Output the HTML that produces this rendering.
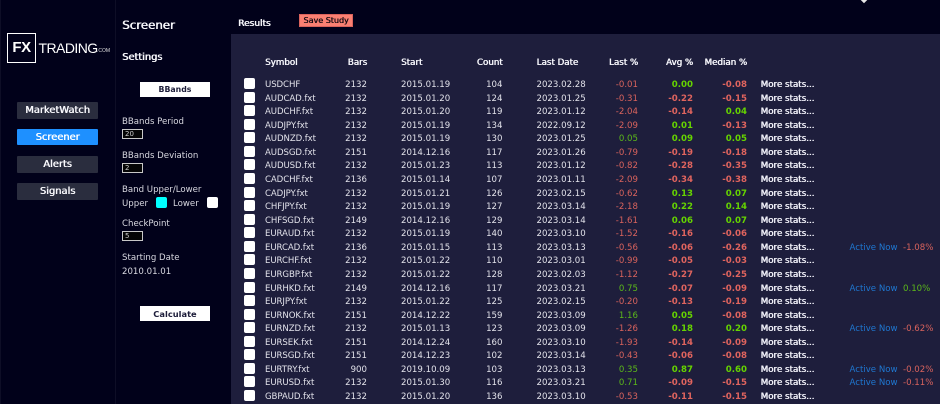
<!DOCTYPE html>
<html><head><meta charset="utf-8"><style>
*{box-sizing:border-box;margin:0;padding:0}
html,body{width:940px;height:404px;overflow:hidden;background:#01011a}
body{position:relative;font-family:"DejaVu Sans","Liberation Sans",sans-serif;font-size:8.6px;color:#e2e2ea}
.abs,.nav,.w{position:absolute}
.nav{left:17px;width:81px;height:17px;background:#2a2d3e;border-radius:1px;color:#f8f8fc;font-size:9.9px;text-shadow:.5px 0 0 #f8f8fc;line-height:18px;text-align:center}
.w{left:140px;width:70px;height:15px;background:#fff;text-align:center;line-height:16px;font-weight:bold;color:#1d1d3a;font-size:7.8px}
.t{position:absolute;left:122px;white-space:nowrap;line-height:12px;color:#d8d8e0}
.f{text-shadow:.6px 0 0 #f8f8fc;color:#f8f8fc}
.inp{position:absolute;left:122px;width:21px;height:10px;background:#050505;border:1px solid #c8c8c8;font-size:7px;line-height:8px;padding-left:2px;color:#ccc}
#panel{position:absolute;left:231px;top:34px;width:709px;height:370px;background:#1e1e3c}
.r{position:absolute;left:0;width:940px;height:14px;line-height:14px;white-space:nowrap}
.r span{position:absolute;top:0}
.r i{position:absolute;left:244px;top:0;width:11px;height:11px;background:#fff;border-radius:2px}
.s{left:265px;letter-spacing:-.1px}.b{right:573px}.d{left:401px}.c{right:437.5px}.l{left:536.5px}
.p{right:302px}.a{right:247px;font-weight:bold}.m{right:193px;font-weight:bold}
.p{color:#d9635d}
.g{color:#66d400!important}
.p.g{color:#5cb81a!important}
.a,.m{color:#e0645e}
.x{left:760.5px;font-size:8.7px;color:#f0f0f8;text-shadow:.5px 0 0 #f0f0f8}
.n{left:849.5px;color:#1f78d2}
.q{left:903px;color:#d9635d}
.q.g{color:#5cb81a!important}
.h span{font-size:8.7px;font-weight:normal;letter-spacing:0;color:#f6f6fb;text-shadow:.5px 0 0 #f6f6fb}
</style></head><body>
<div class="abs" style="left:115px;top:0;width:1px;height:404px;background:#0e0e26"></div>
<div class="abs" style="left:0;top:0;width:1px;height:404px;background:#0e0e26"></div>

<div class="abs" style="left:7px;top:33px;width:29px;height:30px;border:1.5px solid #fff;color:#fff;font:bold 15px/27px 'Liberation Sans',sans-serif;text-align:center;letter-spacing:-.5px">FX</div>
<div class="abs" style="left:38.5px;top:39px;color:#fff;font:14px/18px 'Liberation Sans',sans-serif;letter-spacing:-.55px;white-space:nowrap">TRADING</div>
<div class="abs" style="left:97px;top:47px;color:#ddd;font:5px/8px 'Liberation Sans',sans-serif;white-space:nowrap">.COM</div>

<div class="nav" style="top:102px">MarketWatch</div>
<div class="nav" style="top:129px;background:#1e90ff;height:16px;line-height:17px;color:#fff">Screener</div>
<div class="nav" style="top:156px">Alerts</div>
<div class="nav" style="top:183px">Signals</div>

<div class="t f" style="top:19px;font-size:11.8px">Screener</div>
<div class="t f" style="top:52px;font-size:9.8px">Settings</div>
<div class="w" style="top:82px">BBands</div>
<div class="t" style="top:116px">BBands Period</div>
<div class="inp" style="top:129px">20</div>
<div class="t" style="top:150px">BBands Deviation</div>
<div class="inp" style="top:163px">2</div>
<div class="t" style="top:184px">Band Upper/Lower</div>
<div class="t" style="top:198px">Upper</div>
<div class="abs" style="left:156px;top:197px;width:11px;height:11px;background:#0ff;border-radius:2px"></div>
<div class="t" style="left:173px;top:198px">Lower</div>
<div class="abs" style="left:207px;top:197px;width:11px;height:11px;background:#fff;border-radius:2px"></div>
<div class="t" style="top:218px">CheckPoint</div>
<div class="inp" style="top:231px">5</div>
<div class="t" style="top:252px">Starting Date</div>
<div class="t" style="top:266px">2010.01.01</div>
<div class="w" style="top:306px;font-size:8.3px">Calculate</div>

<div class="t f" style="left:238px;top:18px;font-size:9px">Results</div>
<div class="abs" style="left:299px;top:14px;width:54px;height:13px;background:#fa8072;border:1px solid #d9635d;color:#1a0d14;font-size:8px;text-shadow:.4px 0 0 #1a0d14;line-height:12px;text-align:center;white-space:nowrap">Save Study</div>
<div class="abs" style="left:861px;top:-4px;width:6px;height:6px;background:#e8e8e8;transform:rotate(45deg)"></div>

<div id="panel"></div>

<div class="r h" style="top:56px"><span class="s">Symbol</span><span class="b">Bars</span><span class="d">Start</span><span class="c">Count</span><span class="l">Last Date</span><span class="p">Last %</span><span class="a">Avg %</span><span class="m">Median %</span></div>
<div class="r" style="top:78px"><i></i><span class="s">USDCHF</span><span class="b">2132</span><span class="d">2015.01.19</span><span class="c">104</span><span class="l">2023.02.28</span><span class="p">-0.01</span><span class="a g">0.00</span><span class="m">-0.08</span><span class="x">More stats...</span></div>
<div class="r" style="top:91.6px"><i></i><span class="s">AUDCAD.fxt</span><span class="b">2132</span><span class="d">2015.01.20</span><span class="c">124</span><span class="l">2023.01.25</span><span class="p">-0.31</span><span class="a">-0.22</span><span class="m">-0.15</span><span class="x">More stats...</span></div>
<div class="r" style="top:105.1px"><i></i><span class="s">AUDCHF.fxt</span><span class="b">2132</span><span class="d">2015.01.20</span><span class="c">119</span><span class="l">2023.01.12</span><span class="p">-2.04</span><span class="a">-0.14</span><span class="m g">0.04</span><span class="x">More stats...</span></div>
<div class="r" style="top:118.7px"><i></i><span class="s">AUDJPY.fxt</span><span class="b">2132</span><span class="d">2015.01.19</span><span class="c">134</span><span class="l">2022.09.12</span><span class="p">-2.09</span><span class="a g">0.01</span><span class="m">-0.13</span><span class="x">More stats...</span></div>
<div class="r" style="top:132.3px"><i></i><span class="s">AUDNZD.fxt</span><span class="b">2132</span><span class="d">2015.01.19</span><span class="c">130</span><span class="l">2023.01.25</span><span class="p g">0.05</span><span class="a g">0.09</span><span class="m g">0.05</span><span class="x">More stats...</span></div>
<div class="r" style="top:145.8px"><i></i><span class="s">AUDSGD.fxt</span><span class="b">2151</span><span class="d">2014.12.16</span><span class="c">117</span><span class="l">2023.01.26</span><span class="p">-0.79</span><span class="a">-0.19</span><span class="m">-0.18</span><span class="x">More stats...</span></div>
<div class="r" style="top:159.4px"><i></i><span class="s">AUDUSD.fxt</span><span class="b">2132</span><span class="d">2015.01.23</span><span class="c">113</span><span class="l">2023.01.12</span><span class="p">-0.82</span><span class="a">-0.28</span><span class="m">-0.35</span><span class="x">More stats...</span></div>
<div class="r" style="top:173px"><i></i><span class="s">CADCHF.fxt</span><span class="b">2136</span><span class="d">2015.01.14</span><span class="c">107</span><span class="l">2023.01.11</span><span class="p">-2.09</span><span class="a">-0.34</span><span class="m">-0.38</span><span class="x">More stats...</span></div>
<div class="r" style="top:186.5px"><i></i><span class="s">CADJPY.fxt</span><span class="b">2132</span><span class="d">2015.01.21</span><span class="c">126</span><span class="l">2023.02.15</span><span class="p">-0.62</span><span class="a g">0.13</span><span class="m g">0.07</span><span class="x">More stats...</span></div>
<div class="r" style="top:200.1px"><i></i><span class="s">CHFJPY.fxt</span><span class="b">2132</span><span class="d">2015.01.19</span><span class="c">127</span><span class="l">2023.03.14</span><span class="p">-2.18</span><span class="a g">0.22</span><span class="m g">0.14</span><span class="x">More stats...</span></div>
<div class="r" style="top:213.7px"><i></i><span class="s">CHFSGD.fxt</span><span class="b">2149</span><span class="d">2014.12.16</span><span class="c">129</span><span class="l">2023.03.14</span><span class="p">-1.61</span><span class="a g">0.06</span><span class="m g">0.07</span><span class="x">More stats...</span></div>
<div class="r" style="top:227.2px"><i></i><span class="s">EURAUD.fxt</span><span class="b">2132</span><span class="d">2015.01.19</span><span class="c">140</span><span class="l">2023.03.10</span><span class="p">-1.52</span><span class="a">-0.16</span><span class="m">-0.06</span><span class="x">More stats...</span></div>
<div class="r" style="top:240.8px"><i></i><span class="s">EURCAD.fxt</span><span class="b">2136</span><span class="d">2015.01.15</span><span class="c">113</span><span class="l">2023.03.13</span><span class="p">-0.56</span><span class="a">-0.06</span><span class="m">-0.26</span><span class="x">More stats...</span><span class="n">Active Now</span><span class="q">-1.08%</span></div>
<div class="r" style="top:254.3px"><i></i><span class="s">EURCHF.fxt</span><span class="b">2132</span><span class="d">2015.01.22</span><span class="c">110</span><span class="l">2023.03.01</span><span class="p">-0.99</span><span class="a">-0.05</span><span class="m">-0.03</span><span class="x">More stats...</span></div>
<div class="r" style="top:267.9px"><i></i><span class="s">EURGBP.fxt</span><span class="b">2132</span><span class="d">2015.01.22</span><span class="c">128</span><span class="l">2023.02.03</span><span class="p">-1.12</span><span class="a">-0.27</span><span class="m">-0.25</span><span class="x">More stats...</span></div>
<div class="r" style="top:281.5px"><i></i><span class="s">EURHKD.fxt</span><span class="b">2149</span><span class="d">2014.12.16</span><span class="c">117</span><span class="l">2023.03.21</span><span class="p g">0.75</span><span class="a">-0.07</span><span class="m">-0.09</span><span class="x">More stats...</span><span class="n">Active Now</span><span class="q g">0.10%</span></div>
<div class="r" style="top:295px"><i></i><span class="s">EURJPY.fxt</span><span class="b">2132</span><span class="d">2015.01.22</span><span class="c">125</span><span class="l">2023.02.15</span><span class="p">-0.20</span><span class="a">-0.13</span><span class="m">-0.19</span><span class="x">More stats...</span></div>
<div class="r" style="top:308.6px"><i></i><span class="s">EURNOK.fxt</span><span class="b">2151</span><span class="d">2014.12.22</span><span class="c">159</span><span class="l">2023.03.09</span><span class="p g">1.16</span><span class="a g">0.05</span><span class="m">-0.08</span><span class="x">More stats...</span></div>
<div class="r" style="top:322.2px"><i></i><span class="s">EURNZD.fxt</span><span class="b">2132</span><span class="d">2015.01.13</span><span class="c">123</span><span class="l">2023.03.09</span><span class="p">-1.26</span><span class="a g">0.18</span><span class="m g">0.20</span><span class="x">More stats...</span><span class="n">Active Now</span><span class="q">-0.62%</span></div>
<div class="r" style="top:335.7px"><i></i><span class="s">EURSEK.fxt</span><span class="b">2151</span><span class="d">2014.12.24</span><span class="c">160</span><span class="l">2023.03.10</span><span class="p">-1.93</span><span class="a">-0.14</span><span class="m">-0.09</span><span class="x">More stats...</span></div>
<div class="r" style="top:349.3px"><i></i><span class="s">EURSGD.fxt</span><span class="b">2151</span><span class="d">2014.12.23</span><span class="c">102</span><span class="l">2023.03.14</span><span class="p">-0.43</span><span class="a">-0.06</span><span class="m">-0.08</span><span class="x">More stats...</span></div>
<div class="r" style="top:362.9px"><i></i><span class="s">EURTRY.fxt</span><span class="b">900</span><span class="d">2019.10.09</span><span class="c">103</span><span class="l">2023.03.13</span><span class="p g">0.35</span><span class="a g">0.87</span><span class="m g">0.60</span><span class="x">More stats...</span><span class="n">Active Now</span><span class="q">-0.02%</span></div>
<div class="r" style="top:376.4px"><i></i><span class="s">EURUSD.fxt</span><span class="b">2132</span><span class="d">2015.01.30</span><span class="c">116</span><span class="l">2023.03.21</span><span class="p g">0.71</span><span class="a">-0.09</span><span class="m">-0.15</span><span class="x">More stats...</span><span class="n">Active Now</span><span class="q">-0.11%</span></div>
<div class="r" style="top:390px"><i></i><span class="s">GBPAUD.fxt</span><span class="b">2132</span><span class="d">2015.01.20</span><span class="c">136</span><span class="l">2023.03.10</span><span class="p">-0.53</span><span class="a">-0.11</span><span class="m">-0.15</span><span class="x">More stats...</span></div>
</body></html>
